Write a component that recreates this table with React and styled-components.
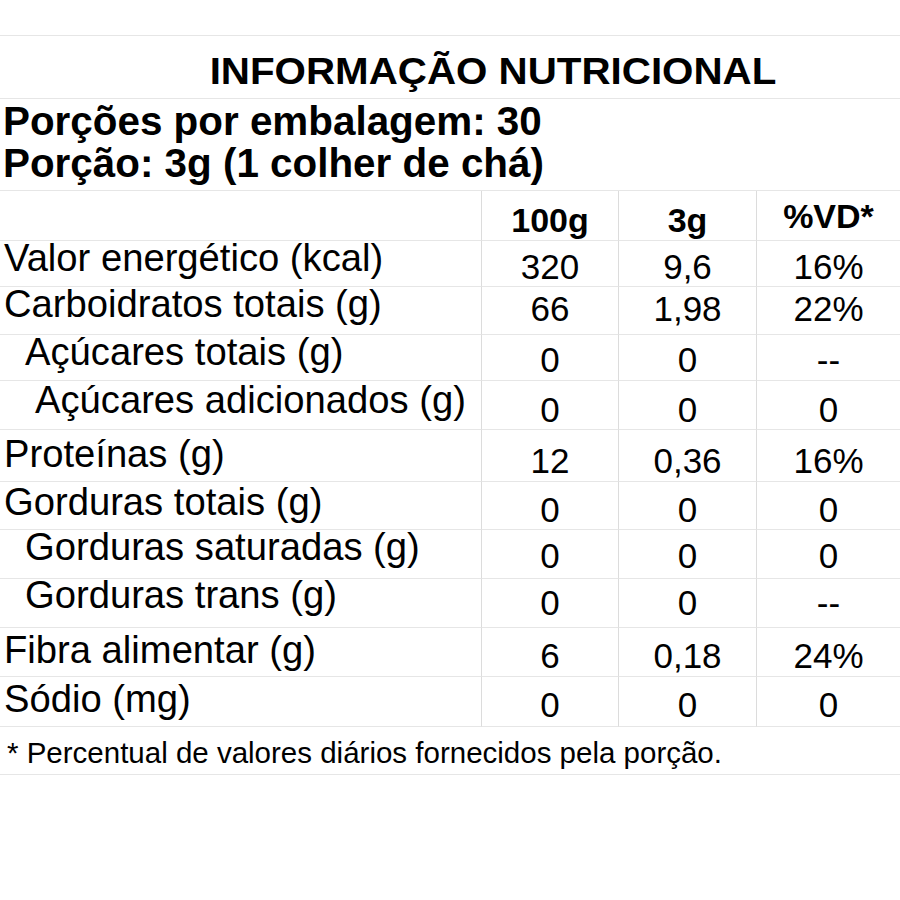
import React from 'react'
import styled, { createGlobalStyle } from 'styled-components'

const GlobalStyle = createGlobalStyle`
  html, body {
    margin: 0;
    padding: 0;
    background: #fff;
  }
  body {
    font-family: "Liberation Sans", Arial, sans-serif;
    color: #000;
  }
`

const Page = styled.div`
  width: 900px;
  padding-top: 35px;
`

const TitleBar = styled.div`
  box-sizing: border-box;
  height: 64px;
  border-top: 1px solid #e6e6e6;
  border-bottom: 1px solid #e6e6e6;
  display: flex;
  justify-content: center;
  padding: 18px 0 0 86px;
`

const Title = styled.h1`
  margin: 0;
  font-size: 36px;
  line-height: 1;
  font-weight: 700;
  transform: scaleX(1.12);
  transform-origin: center;
  white-space: nowrap;
`

const Servings = styled.div`
  box-sizing: border-box;
  height: 92px;
  border-bottom: 1px solid #e6e6e6;
  padding: 1px 0 0 3px;
`

const ServingLine = styled.div`
  font-size: 40.4px;
  line-height: 42px;
  font-weight: 700;
  white-space: nowrap;
`

const Table = styled.div`
  display: grid;
  grid-template-columns: 481px 137px 138px 1fr;
`

const Cell = styled.div`
  box-sizing: border-box;
  height: ${p => p.$h}px;
  border-bottom: 1px solid #e6e6e6;
  white-space: nowrap;
`

const LabelCell = styled(Cell)`
  font-size: 38.2px;
  line-height: 30px;
  padding-top: ${p => p.$base - 29.2}px;
  padding-left: ${p => 4 + p.$indent}px;
`

const ValueCell = styled(Cell)`
  font-size: 35px;
  line-height: 30px;
  text-align: center;
  border-left: 1px solid #dcdcdc;
  padding-top: ${p => p.$base - 28.1}px;
`

const HeadCell = styled(Cell)`
  font-size: 34px;
  line-height: 1;
  font-weight: 700;
  text-align: center;
  border-left: ${p => (p.$first ? 'none' : '1px solid #dcdcdc')};
  padding-top: ${p => p.$pad}px;
`

const Footnote = styled.div`
  box-sizing: border-box;
  height: 48px;
  border-bottom: 1px solid #e6e6e6;
  font-size: 29.5px;
  line-height: 1;
  padding: 11px 0 0 7px;
  white-space: nowrap;
`

const rows = [
  { label: 'Valor energético (kcal)', values: ['320', '9,6', '16%'], h: 46, lb: 31, vb: 39 },
  { label: 'Carboidratos totais (g)', values: ['66', '1,98', '22%'], h: 48, lb: 31, vb: 35 },
  { label: 'Açúcares totais (g)', values: ['0', '0', '--'], h: 46, lb: 31, vb: 38, indent: 21 },
  { label: 'Açúcares adicionados (g)', values: ['0', '0', '0'], h: 49, lb: 33, vb: 42, indent: 31 },
  { label: 'Proteínas (g)', values: ['12', '0,36', '16%'], h: 52, lb: 38, vb: 44 },
  { label: 'Gorduras totais (g)', values: ['0', '0', '0'], h: 48, lb: 34, vb: 41 },
  { label: 'Gorduras saturadas (g)', values: ['0', '0', '0'], h: 49, lb: 31, vb: 39, indent: 21 },
  { label: 'Gorduras trans (g)', values: ['0', '0', '--'], h: 49, lb: 30, vb: 37, indent: 21 },
  { label: 'Fibra alimentar (g)', values: ['6', '0,18', '24%'], h: 49, lb: 36, vb: 41 },
  { label: 'Sódio (mg)', values: ['0', '0', '0'], h: 50, lb: 36, vb: 41 },
]

export default function App() {
  return (
    <Page>
      <GlobalStyle />
      <TitleBar>
        <Title>INFORMAÇÃO NUTRICIONAL</Title>
      </TitleBar>
      <Servings>
        <ServingLine>Porções por embalagem: 30</ServingLine>
        <ServingLine>Porção: 3g (1 colher de chá)</ServingLine>
      </Servings>
      <Table>
        <HeadCell $h={50} $first $pad={12} />
        <HeadCell $h={50} $pad={12}>100g</HeadCell>
        <HeadCell $h={50} $pad={12}>3g</HeadCell>
        <HeadCell $h={50} $pad={8}>%VD*</HeadCell>
        {rows.map(row => (
          <React.Fragment key={row.label}>
            <LabelCell $h={row.h} $base={row.lb} $indent={row.indent || 0}>
              {row.label}
            </LabelCell>
            {row.values.map((v, i) => (
              <ValueCell key={i} $h={row.h} $base={row.vb}>
                {v}
              </ValueCell>
            ))}
          </React.Fragment>
        ))}
      </Table>
      <Footnote>* Percentual de valores diários fornecidos pela porção.</Footnote>
    </Page>
  )
}
